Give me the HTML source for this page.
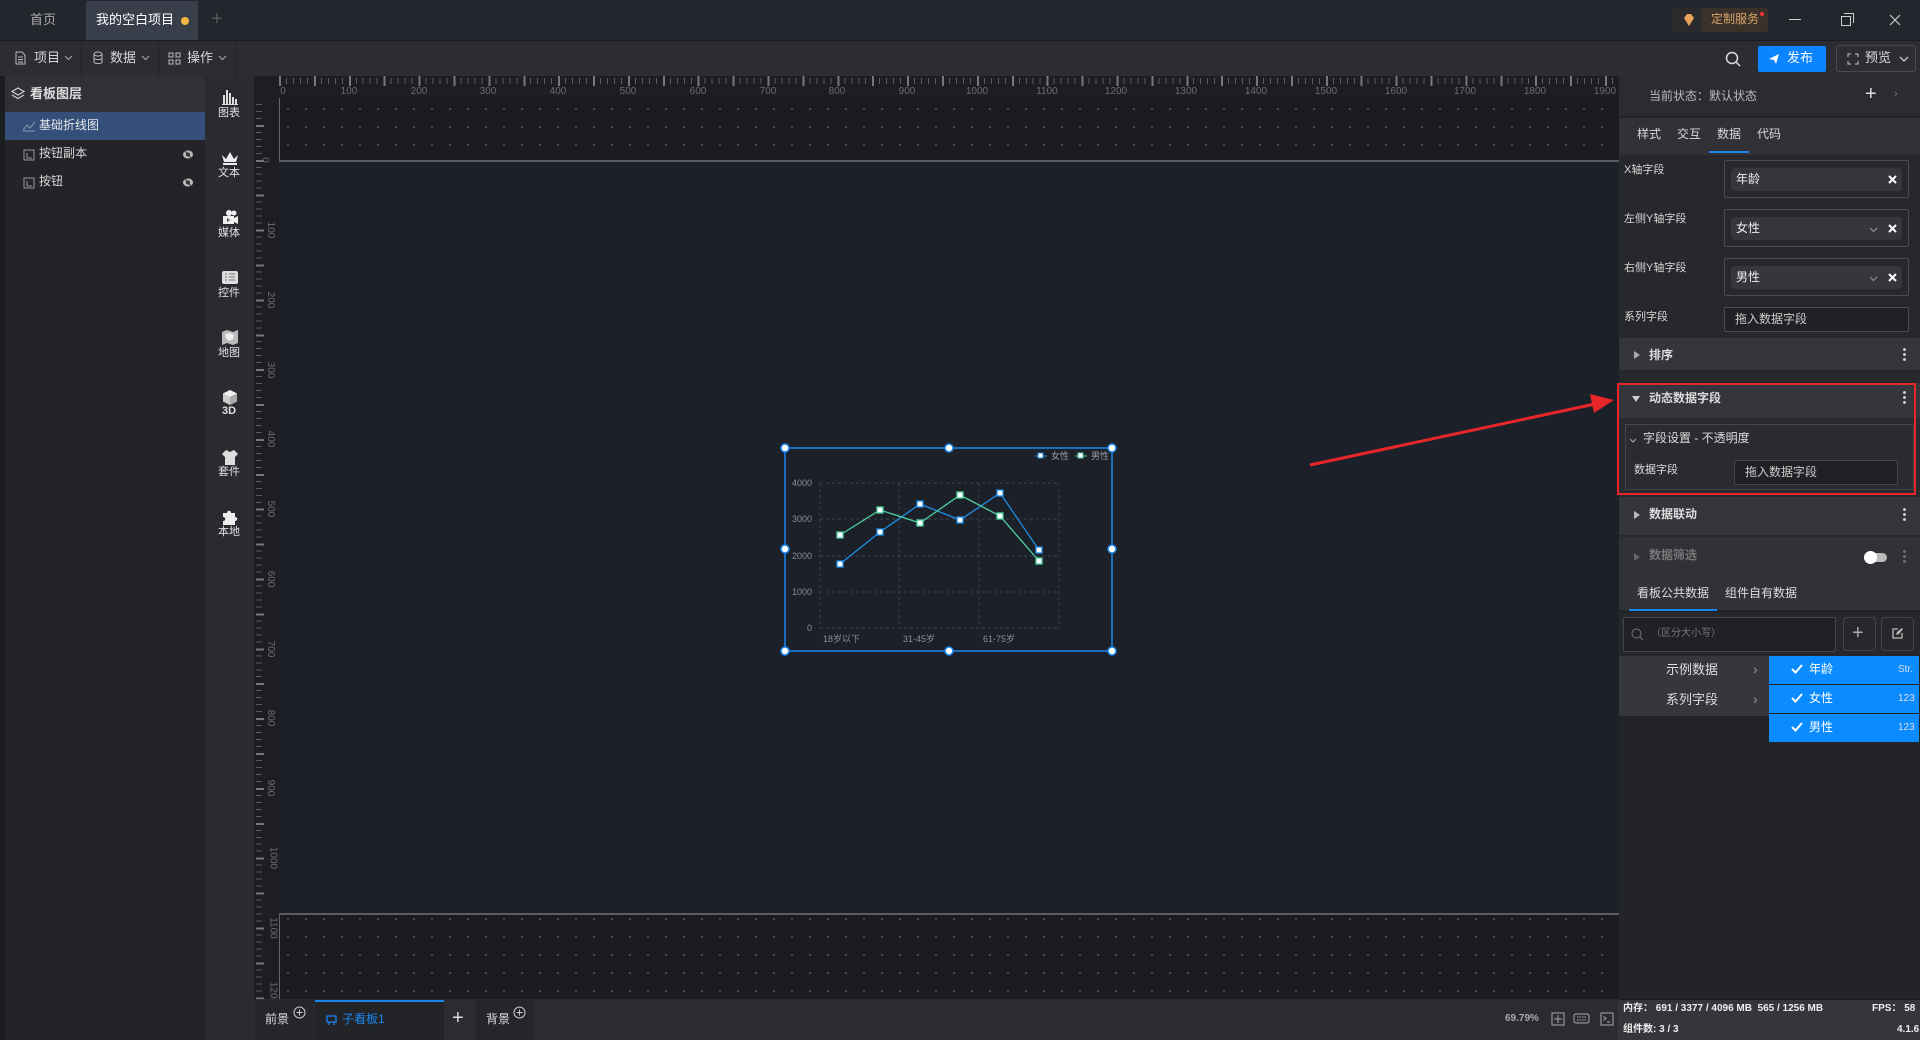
<!DOCTYPE html>
<html><head><meta charset="utf-8">
<style>
*{margin:0;padding:0;box-sizing:border-box}
body{width:1920px;height:1040px;overflow:hidden;background:#1b1c1f;font-family:"Liberation Sans","Noto Sans CJK SC",sans-serif;font-size:12px;color:#d8d8d8;position:relative}
.a{position:absolute}
.t{position:absolute;white-space:nowrap;line-height:1.2}
.rl{position:absolute;top:86px;font-size:10px;color:#6b6c70;transform:translateX(-50%)}
.ll{position:absolute;left:262px;font-size:10px;color:#6b6c70;transform:translateY(-50%) rotate(90deg);transform-origin:center}
.hdr{position:absolute;left:1619px;width:301px;background:#35363c}
.dots3{position:absolute;right:14px;width:3px}
.dots3 i{display:block;width:3px;height:3px;border-radius:50%;background:#ccc;margin-bottom:2px}
</style></head><body>
<!-- title bar -->
<div class="a" style="left:0;top:0;width:1920px;height:41px;background:#24262d;border-bottom:1px solid #1a1b1e"></div>
<div class="t" style="left:30px;top:12px;font-size:13px;color:#aaa">首页</div>
<div class="a" style="left:86px;top:1px;width:112px;height:39px;background:#393e4b"></div>
<div class="t" style="left:96px;top:12px;font-size:13px;color:#fff">我的空白项目</div>
<div class="a" style="left:181px;top:17px;width:8px;height:8px;border-radius:50%;background:#f5b942"></div>
<div class="t" style="left:211px;top:7px;font-size:20px;color:#555">+</div>
<div class="a" style="left:1672px;top:8px;width:96px;height:24px;background:#3a3128;border-radius:3px"></div>
<div class="a" style="left:1672px;top:8px;width:30px;height:24px;background:#2a2a2c;border-radius:3px 0 0 3px"></div>
<svg class="a" style="left:1682px;top:13px" width="14" height="14"><path d="M2 5 L5 1 H9 L12 5 L7 13 Z" fill="#e8a456"/></svg>
<div class="t" style="left:1711px;top:12px;font-size:12px;color:#d9a36a">定制服务</div>
<div class="a" style="left:1760px;top:12px;width:4px;height:4px;border-radius:50%;background:#e33"></div>
<div class="a" style="left:1789px;top:19px;width:12px;height:1px;background:#ccc"></div>
<div class="a" style="left:1841px;top:16px;width:10px;height:10px;border:1px solid #ccc"></div>
<div class="a" style="left:1844px;top:13px;width:10px;height:10px;border-top:1px solid #ccc;border-right:1px solid #ccc"></div>
<svg class="a" style="left:1889px;top:14px" width="12" height="12"><path d="M1 1L11 11M11 1L1 11" stroke="#ccc" stroke-width="1.2"/></svg>
<!-- toolbar -->
<div class="a" style="left:0;top:41px;width:1920px;height:35px;background:#2c2d32"></div>
<div class="a" style="left:81px;top:41px;width:1px;height:35px;background:#222"></div>
<div class="a" style="left:158px;top:41px;width:1px;height:35px;background:#222"></div>
<div class="a" style="left:235px;top:41px;width:1px;height:35px;background:#222"></div>
<svg class="a" style="left:15px;top:51px" width="11" height="14"><path d="M1 1H7L10 4V13H1Z M3 6H8M3 8.5H8M3 11H8" fill="none" stroke="#bbb"/></svg>
<div class="t" style="left:34px;top:50px;font-size:13px">项目</div>
<svg class="a" style="left:64px;top:55px" width="9" height="6"><path d="M1 1L4.5 4.5L8 1" fill="none" stroke="#aaa"/></svg>
<svg class="a" style="left:93px;top:51px" width="10" height="14"><ellipse cx="5" cy="3" rx="4" ry="2" fill="none" stroke="#bbb"/><path d="M1 3V11C1 13 9 13 9 11V3M1 7C1 9 9 9 9 7" fill="none" stroke="#bbb"/></svg>
<div class="t" style="left:110px;top:50px;font-size:13px">数据</div>
<svg class="a" style="left:141px;top:55px" width="9" height="6"><path d="M1 1L4.5 4.5L8 1" fill="none" stroke="#aaa"/></svg>
<svg class="a" style="left:168px;top:52px" width="13" height="13"><rect x="1" y="1" width="4" height="4" fill="none" stroke="#bbb"/><rect x="8" y="1" width="4" height="4" fill="none" stroke="#bbb"/><rect x="1" y="8" width="4" height="4" fill="none" stroke="#bbb"/><rect x="8" y="8" width="4" height="4" fill="none" stroke="#bbb"/></svg>
<div class="t" style="left:187px;top:50px;font-size:13px">操作</div>
<svg class="a" style="left:218px;top:55px" width="9" height="6"><path d="M1 1L4.5 4.5L8 1" fill="none" stroke="#aaa"/></svg>
<svg class="a" style="left:1725px;top:51px" width="17" height="17"><circle cx="7" cy="7" r="5.5" fill="none" stroke="#ddd" stroke-width="1.5"/><path d="M11 11L15 15" stroke="#ddd" stroke-width="1.5"/></svg>
<div class="a" style="left:1758px;top:46px;width:68px;height:26px;background:#0a84ff;border-radius:2px"></div>
<svg class="a" style="left:1768px;top:53px" width="12" height="12"><path d="M1 6L11 1L8 11L6 7Z" fill="#fff"/></svg>
<div class="t" style="left:1787px;top:50px;font-size:13px;color:#fff">发布</div>
<div class="a" style="left:1836px;top:45px;width:80px;height:27px;border:1px solid #4a4b50;border-radius:3px"></div>
<svg class="a" style="left:1847px;top:53px" width="12" height="12"><path d="M1 4V1H4M8 1H11V4M11 8V11H8M4 11H1V8" fill="none" stroke="#ccc"/></svg>
<div class="t" style="left:1865px;top:50px;font-size:13px;color:#ddd">预览</div>
<svg class="a" style="left:1899px;top:56px" width="10" height="6"><path d="M1 1L5 5L9 1" fill="none" stroke="#ccc" stroke-width="1.3"/></svg>
<!-- left panel -->
<div class="a" style="left:0;top:76px;width:5px;height:964px;background:#1c1d20"></div>
<div class="a" style="left:5px;top:76px;width:200px;height:36px;background:#303137"></div>
<div class="a" style="left:5px;top:112px;width:200px;height:928px;background:#232428"></div>
<svg class="a" style="left:11px;top:87px" width="14" height="13"><path d="M7 1L13 4.5L7 8L1 4.5Z M1 8L7 11.5L13 8" fill="none" stroke="#ccc" stroke-width="1.3"/></svg>
<div class="t" style="left:30px;top:86px;font-size:13px;font-weight:bold;color:#ddd">看板图层</div>
<div class="a" style="left:5px;top:112px;width:200px;height:28px;background:#34507a"></div>
<svg class="a" style="left:22px;top:120px" width="14" height="12"><path d="M1 10L5 5L8 8L13 2M1 11H13" fill="none" stroke="#8a9ab0"/></svg>
<div class="t" style="left:39px;top:118px;font-size:12px;color:#e8e8e8">基础折线图</div>
<svg class="a" style="left:23px;top:149px" width="12" height="12"><rect x="1" y="1" width="10" height="10" fill="none" stroke="#999"/><path d="M4 4V9H9" fill="none" stroke="#999"/></svg>
<div class="t" style="left:39px;top:146px;font-size:12px">按钮副本</div>
<svg class="a" style="left:182px;top:149px" width="12" height="11"><ellipse cx="6" cy="5.5" rx="5" ry="4" fill="#bbb"/><circle cx="6" cy="5.5" r="2" fill="#333"/><path d="M2 1L10 10" stroke="#333"/></svg>
<svg class="a" style="left:23px;top:177px" width="12" height="12"><rect x="1" y="1" width="10" height="10" fill="none" stroke="#999"/><path d="M4 4V9H9" fill="none" stroke="#999"/></svg>
<div class="t" style="left:39px;top:174px;font-size:12px">按钮</div>
<svg class="a" style="left:182px;top:177px" width="12" height="11"><ellipse cx="6" cy="5.5" rx="5" ry="4" fill="#bbb"/><circle cx="6" cy="5.5" r="2" fill="#333"/><path d="M2 1L10 10" stroke="#333"/></svg>
<!-- icon column -->
<div class="a" style="left:205px;top:76px;width:49px;height:964px;background:#2a2b30"></div>
<svg class="a" style="left:221px;top:89px" width="18" height="16"><rect x="2" y="6" width="2" height="9" fill="#ddd"/><rect x="5" y="1" width="2" height="14" fill="#ddd"/><rect x="8" y="4" width="2" height="11" fill="#ddd"/><rect x="11" y="8" width="2" height="7" fill="#ddd"/><rect x="14" y="10" width="2" height="5" fill="#ddd"/><rect x="1" y="15" width="16" height="1" fill="#ddd"/></svg>
<div class="t" style="left:218px;top:107px;font-size:11px;color:#e0e0e0">图表</div>
<svg class="a" style="left:221px;top:151px" width="18" height="15"><path d="M1 4L5 8L9 1L13 8L17 4L15 11H3Z" fill="#eee"/><rect x="2" y="12" width="14" height="2" fill="#eee"/></svg>
<div class="t" style="left:218px;top:167px;font-size:11px;color:#e0e0e0">文本</div>
<svg class="a" style="left:221px;top:209px" width="18" height="16"><circle cx="8" cy="4" r="3" fill="#eee"/><circle cx="13" cy="4" r="2.5" fill="#eee"/><rect x="2" y="7" width="11" height="8" fill="#eee"/><path d="M13 9L17 7V15L13 13Z" fill="#eee"/><path d="M6 9L9 11L6 13Z" fill="#555"/></svg>
<div class="t" style="left:218px;top:227px;font-size:11px;color:#e0e0e0">媒体</div>
<svg class="a" style="left:221px;top:270px" width="18" height="15"><rect x="1" y="1" width="16" height="13" rx="2" fill="#ddd"/><path d="M4 4H6M8 4H14M4 7H6M8 7H14M4 10H6M8 10H14" stroke="#777"/></svg>
<div class="t" style="left:218px;top:287px;font-size:11px;color:#e0e0e0">控件</div>
<svg class="a" style="left:221px;top:329px" width="18" height="17"><path d="M1 3L6 1L12 3L17 1V14L12 16L6 14L1 16Z" fill="#bbb"/><path d="M4 5L9 4L13 6L12 10L8 12L5 9Z" fill="#eee"/></svg>
<div class="t" style="left:218px;top:347px;font-size:11px;color:#e0e0e0">地图</div>
<svg class="a" style="left:222px;top:389px" width="16" height="17"><path d="M8 1L15 4.5V12.5L8 16L1 12.5V4.5Z" fill="#ccc"/><path d="M8 1L15 4.5L8 8L1 4.5Z" fill="#eee"/><path d="M8 8V16L15 12.5V4.5Z" fill="#aaa"/></svg>
<div class="t" style="left:222px;top:405px;font-size:11px;font-weight:bold;color:#e0e0e0">3D</div>
<svg class="a" style="left:221px;top:449px" width="18" height="17"><path d="M5 1L9 3L13 1L17 5L14 8V16H4V8L1 5Z" fill="#ddd"/></svg>
<div class="t" style="left:218px;top:466px;font-size:11px;color:#e0e0e0">套件</div>
<svg class="a" style="left:221px;top:509px" width="18" height="17"><path d="M2 4H6C6 1 10 1 10 4H14V8C17 8 17 12 14 12V16H2V12C5 12 5 8 2 8Z" fill="#eee"/></svg>
<div class="t" style="left:218px;top:526px;font-size:11px;color:#e0e0e0">本地</div>
<!-- rulers -->
<div class="a" style="left:254px;top:76px;width:1365px;height:22px;background:#1d1e21"></div>
<div class="a" style="left:254px;top:76px;width:25px;height:923px;background:#1d1e21"></div>
<div class="a" style="left:279px;top:78px;width:1340px;height:6px;background:repeating-linear-gradient(to right,#5a5b5f 0 1px,transparent 1px 6.979px)"></div>
<div class="a" style="left:279px;top:76px;width:1340px;height:10px;background:repeating-linear-gradient(to right,#77787c 0 2px,transparent 2px 34.895px)"></div>
<div class="a" style="left:256px;top:90px;width:6px;height:909px;background:repeating-linear-gradient(to bottom,#5a5b5f 0 1px,transparent 1px 6.979px)"></div>
<div class="a" style="left:256px;top:90px;width:8px;height:909px;background:repeating-linear-gradient(to bottom,#77787c 0 2px,transparent 2px 34.895px)"></div>
<div class="a" style="left:254px;top:76px;width:25px;height:22px;background:#1d1e21"></div>
<div class="rl" style="left:283px">0</div><div class="rl" style="left:349px">100</div><div class="rl" style="left:419px">200</div><div class="rl" style="left:488px">300</div><div class="rl" style="left:558px">400</div><div class="rl" style="left:628px">500</div><div class="rl" style="left:698px">600</div><div class="rl" style="left:768px">700</div><div class="rl" style="left:837px">800</div><div class="rl" style="left:907px">900</div><div class="rl" style="left:977px">1000</div><div class="rl" style="left:1047px">1100</div><div class="rl" style="left:1116px">1200</div><div class="rl" style="left:1186px">1300</div><div class="rl" style="left:1256px">1400</div><div class="rl" style="left:1326px">1500</div><div class="rl" style="left:1396px">1600</div><div class="rl" style="left:1465px">1700</div><div class="rl" style="left:1535px">1800</div><div class="rl" style="left:1605px">1900</div>
<div class="ll" style="top:160px">0</div><div class="ll" style="top:230px">100</div><div class="ll" style="top:300px">200</div><div class="ll" style="top:370px">300</div><div class="ll" style="top:439px">400</div><div class="ll" style="top:509px">500</div><div class="ll" style="top:579px">600</div><div class="ll" style="top:649px">700</div><div class="ll" style="top:718px">800</div><div class="ll" style="top:788px">900</div><div class="ll" style="top:858px">1000</div><div class="ll" style="top:928px">1100</div><div class="ll" style="top:993px">1200</div>
<!-- canvas -->
<div class="a" style="left:279px;top:98px;width:1340px;height:901px;background:#1b1c1f radial-gradient(circle,#55565a 0.8px,transparent 1.2px);background-size:18px 18px;background-position:0 2px"></div>
<div class="a" style="left:279px;top:98px;width:1px;height:901px;background:#666"></div>
<div class="a" style="left:279px;top:160px;width:1340px;height:755px;background:#1b2029;border-top:2px solid #5a5c60;border-bottom:2px solid #5a5c60"></div>
<svg class="a" style="left:0;top:0" width="1920" height="1040">
<g stroke="#3b4049" stroke-dasharray="3,3" fill="none"><path d="M820 483H1059M820 519H1059M820 556H1059M820 592H1059M820 628H1059M820 483V628M899 483V628M979 483V628M1059 483V628"/></g>
<g font-size="9" fill="#8a8e96" font-family="Liberation Sans, Noto Sans CJK SC, sans-serif" text-anchor="end"><text x="812" y="486">4000</text><text x="812" y="522">3000</text><text x="812" y="559">2000</text><text x="812" y="595">1000</text><text x="812" y="631">0</text></g>
<g font-size="9" fill="#8a8e96" font-family="Liberation Sans, Noto Sans CJK SC, sans-serif"><text x="823" y="642">18岁以下</text><text x="903" y="642">31-45岁</text><text x="983" y="642">61-75岁</text></g>
<polyline points="840,564 880,532 920,504 960,520 1000,493 1039,550" fill="none" stroke="#1f8fe6" stroke-width="1.3"/>
<polyline points="840,535 880,510 920,523 960,495 1000,516 1039,561" fill="none" stroke="#4fd1a0" stroke-width="1.3"/>
<g fill="#fff" stroke="#1f8fe6" stroke-width="1.3"><rect x="837" y="561" width="6" height="6"/><rect x="877" y="529" width="6" height="6"/><rect x="917" y="501" width="6" height="6"/><rect x="957" y="517" width="6" height="6"/><rect x="997" y="490" width="6" height="6"/><rect x="1036" y="547" width="6" height="6"/></g>
<g fill="#fff" stroke="#4fd1a0" stroke-width="1.3"><rect x="837" y="532" width="6" height="6"/><rect x="877" y="507" width="6" height="6"/><rect x="917" y="520" width="6" height="6"/><rect x="957" y="492" width="6" height="6"/><rect x="997" y="513" width="6" height="6"/><rect x="1036" y="558" width="6" height="6"/></g>
<path d="M1035 456H1047" stroke="#1f8fe6"/><rect x="1038" y="453" width="5" height="5" fill="#fff" stroke="#1f8fe6"/>
<path d="M1075 456H1087" stroke="#4fd1a0"/><rect x="1078" y="453" width="5" height="5" fill="#fff" stroke="#4fd1a0"/>
<g font-size="9" fill="#9aa0a8" font-family="Liberation Sans, Noto Sans CJK SC, sans-serif"><text x="1051" y="459">女性</text><text x="1091" y="459">男性</text></g>
<rect x="785" y="448" width="327" height="203" fill="none" stroke="#1a86f0" stroke-width="1.5"/>
<g fill="#fff" stroke="#1a86f0" stroke-width="1.5"><circle cx="785" cy="448" r="4"/><circle cx="949" cy="448" r="4"/><circle cx="1112" cy="448" r="4"/><circle cx="785" cy="549" r="4"/><circle cx="1112" cy="549" r="4"/><circle cx="785" cy="651" r="4"/><circle cx="949" cy="651" r="4"/><circle cx="1112" cy="651" r="4"/></g>
<path d="M1310 465L1595 404" stroke="#e8262a" stroke-width="3"/>
<path d="M1614 400L1590 394L1594 413Z" fill="#e8262a"/>
</svg>
<!-- bottom bar -->
<div class="a" style="left:254px;top:999px;width:1365px;height:41px;background:#2b2c31"></div>
<div class="a" style="left:255px;top:1000px;width:59px;height:40px;background:#25262b"></div>
<div class="t" style="left:265px;top:1012px;font-size:12px;color:#ddd">前景</div>
<svg class="a" style="left:293px;top:1006px" width="13" height="13"><circle cx="6.5" cy="6.5" r="5.5" fill="none" stroke="#ccc"/><path d="M6.5 3.5V9.5M3.5 6.5H9.5" stroke="#ccc"/></svg>
<div class="a" style="left:315px;top:1000px;width:129px;height:40px;background:#232428;border-top:2px solid #1a86f0"></div>
<svg class="a" style="left:326px;top:1015px" width="11" height="11"><path d="M1 1H10V7H1Z M3 7V10M8 7V10" fill="none" stroke="#1a86f0" stroke-width="1.3"/></svg>
<div class="t" style="left:342px;top:1012px;font-size:12px;color:#1a86f0">子看板1</div>
<div class="a" style="left:445px;top:1000px;width:30px;height:40px;background:#2b2c31"></div>
<div class="t" style="left:452px;top:1006px;font-size:20px;color:#ddd">+</div>
<div class="a" style="left:476px;top:1000px;width:58px;height:40px;background:#25262b"></div>
<div class="t" style="left:486px;top:1012px;font-size:12px;color:#ddd">背景</div>
<svg class="a" style="left:513px;top:1006px" width="13" height="13"><circle cx="6.5" cy="6.5" r="5.5" fill="none" stroke="#ccc"/><path d="M6.5 3.5V9.5M3.5 6.5H9.5" stroke="#ccc"/></svg>
<div class="t" style="left:1505px;top:1013px;font-size:10px;color:#aaa;font-weight:bold">69.79%</div>
<svg class="a" style="left:1551px;top:1012px" width="14" height="14"><rect x="1" y="1" width="12" height="12" fill="none" stroke="#aaa"/><path d="M7 3V11M3 7H11" stroke="#aaa"/></svg>
<svg class="a" style="left:1573px;top:1013px" width="17" height="11"><rect x="1" y="1" width="15" height="9" rx="2" fill="none" stroke="#aaa"/><path d="M4 4H13M4 7H13" stroke="#aaa" stroke-dasharray="1.5,1"/></svg>
<svg class="a" style="left:1600px;top:1012px" width="14" height="14"><rect x="1" y="1" width="12" height="12" fill="none" stroke="#aaa"/><path d="M3.5 4.5L6 6.5L3.5 8.5M7 10H10" fill="none" stroke="#aaa"/></svg>
<!-- right panel -->
<div class="a" style="left:1619px;top:76px;width:301px;height:923px;background:#27282c"></div>
<div class="a" style="left:1619px;top:76px;width:301px;height:41px;background:#2b2c31;border-bottom:1px solid #222"></div>
<div class="t" style="left:1649px;top:89px;font-size:12px;color:#bbb">当前状态：默认状态</div>
<div class="t" style="left:1865px;top:82px;font-size:20px;color:#ddd">+</div>
<div class="t" style="left:1894px;top:88px;font-size:11px;color:#777">›</div>
<div class="a" style="left:1619px;top:118px;width:301px;height:37px;background:#313238"></div>
<div class="t" style="left:1637px;top:127px;font-size:12px">样式</div>
<div class="t" style="left:1677px;top:127px;font-size:12px">交互</div>
<div class="t" style="left:1717px;top:127px;font-size:12px">数据</div>
<div class="t" style="left:1757px;top:127px;font-size:12px">代码</div>
<div class="a" style="left:1709px;top:151px;width:40px;height:2px;background:#1a86f0"></div>
<div class="t" style="left:1624px;top:164px;font-size:11px">X轴字段</div>
<div class="a" style="left:1724px;top:160px;width:185px;height:38px;border:1px solid #4a4b50;border-radius:2px"></div>
<div class="a" style="left:1731px;top:168px;width:171px;height:23px;background:#36373c;border-radius:4px"></div>
<div class="t" style="left:1736px;top:172px;font-size:12px;color:#eee">年龄</div>
<svg class="a" style="left:1888px;top:175px" width="9" height="9"><path d="M1 1L8 8M8 1L1 8" stroke="#fff" stroke-width="2"/></svg>
<div class="t" style="left:1624px;top:213px;font-size:11px">左侧Y轴字段</div>
<div class="a" style="left:1724px;top:209px;width:185px;height:38px;border:1px solid #4a4b50;border-radius:2px"></div>
<div class="a" style="left:1731px;top:217px;width:171px;height:23px;background:#36373c;border-radius:4px"></div>
<div class="t" style="left:1736px;top:221px;font-size:12px;color:#eee">女性</div>
<svg class="a" style="left:1869px;top:227px" width="9" height="6"><path d="M1 1L4.5 4.5L8 1" fill="none" stroke="#999"/></svg>
<svg class="a" style="left:1888px;top:224px" width="9" height="9"><path d="M1 1L8 8M8 1L1 8" stroke="#fff" stroke-width="2"/></svg>
<div class="t" style="left:1624px;top:262px;font-size:11px">右侧Y轴字段</div>
<div class="a" style="left:1724px;top:258px;width:185px;height:38px;border:1px solid #4a4b50;border-radius:2px"></div>
<div class="a" style="left:1731px;top:266px;width:171px;height:23px;background:#36373c;border-radius:4px"></div>
<div class="t" style="left:1736px;top:270px;font-size:12px;color:#eee">男性</div>
<svg class="a" style="left:1869px;top:276px" width="9" height="6"><path d="M1 1L4.5 4.5L8 1" fill="none" stroke="#999"/></svg>
<svg class="a" style="left:1888px;top:273px" width="9" height="9"><path d="M1 1L8 8M8 1L1 8" stroke="#fff" stroke-width="2"/></svg>
<div class="t" style="left:1624px;top:311px;font-size:11px">系列字段</div>
<div class="a" style="left:1724px;top:307px;width:185px;height:25px;border:1px solid #4a4b50;border-radius:2px;background:#202124"></div>
<div class="t" style="left:1735px;top:312px;font-size:12px;color:#ccc">拖入数据字段</div>
<div class="hdr" style="top:338px;height:32px"></div>
<svg class="a" style="left:1634px;top:351px" width="6" height="8"><path d="M0 0L6 4L0 8Z" fill="#aaa"/></svg>
<div class="t" style="left:1649px;top:348px;font-size:12px;font-weight:bold;color:#ddd">排序</div>
<div class="dots3" style="top:348px"><i></i><i></i><i></i></div>
<div class="hdr" style="top:383px;height:35px"></div>
<svg class="a" style="left:1632px;top:396px" width="8" height="6"><path d="M0 0H8L4 6Z" fill="#ccc"/></svg>
<div class="t" style="left:1649px;top:391px;font-size:12px;font-weight:bold;color:#ddd">动态数据字段</div>
<div class="dots3" style="top:391px"><i></i><i></i><i></i></div>
<div class="a" style="left:1619px;top:418px;width:301px;height:78px;background:#2a2b30"></div>
<div class="a" style="left:1625px;top:424px;width:289px;height:66px;border:1px solid #45464b"></div>
<svg class="a" style="left:1629px;top:438px" width="8" height="6"><path d="M1 1L4 4L7 1" fill="none" stroke="#aaa"/></svg>
<div class="t" style="left:1643px;top:431px;font-size:12px;color:#ddd">字段设置 - 不透明度</div>
<div class="t" style="left:1634px;top:464px;font-size:11px;color:#ddd">数据字段</div>
<div class="a" style="left:1734px;top:460px;width:164px;height:25px;background:#202124;border:1px solid #45464b;border-radius:2px"></div>
<div class="t" style="left:1745px;top:465px;font-size:12px;color:#ccc">拖入数据字段</div>
<div class="a" style="left:1617px;top:383px;width:299px;height:112px;border:2px solid #e8262a"></div>
<div class="hdr" style="top:497px;height:38px"></div>
<svg class="a" style="left:1634px;top:511px" width="6" height="8"><path d="M0 0L6 4L0 8Z" fill="#bbb"/></svg>
<div class="t" style="left:1649px;top:507px;font-size:12px;font-weight:bold;color:#ddd">数据联动</div>
<div class="dots3" style="top:508px"><i></i><i></i><i></i></div>
<div class="hdr" style="top:537px;height:73px;background:#313238"></div>
<svg class="a" style="left:1634px;top:553px" width="6" height="8"><path d="M0 0L6 4L0 8Z" fill="#666"/></svg>
<div class="t" style="left:1649px;top:548px;font-size:12px;font-weight:bold;color:#777">数据筛选</div>
<div class="a" style="left:1864px;top:553px;width:23px;height:9px;border-radius:5px;background:#bbb"></div>
<div class="a" style="left:1864px;top:551px;width:13px;height:13px;border-radius:50%;background:#fff"></div>
<div class="dots3" style="top:550px;opacity:.4"><i></i><i></i><i></i></div>
<div class="t" style="left:1637px;top:586px;font-size:12px;color:#ddd">看板公共数据</div>
<div class="t" style="left:1725px;top:586px;font-size:12px;color:#ddd">组件自有数据</div>
<div class="a" style="left:1629px;top:609px;width:88px;height:2px;background:#1a86f0"></div>
<div class="a" style="left:1619px;top:611px;width:301px;height:1px;background:#1e1f22"></div>
<div class="a" style="left:1619px;top:612px;width:301px;height:44px;background:#27282c"></div>
<div class="a" style="left:1623px;top:617px;width:213px;height:35px;background:#202124;border:1px solid #45464b;border-radius:2px"></div>
<svg class="a" style="left:1631px;top:628px" width="13" height="13"><circle cx="5.5" cy="5.5" r="4.5" fill="none" stroke="#777"/><path d="M9 9L12 12" stroke="#777"/></svg>
<div class="t" style="left:1651px;top:628px;font-size:10px;color:#777">（区分大小写）</div>
<div class="a" style="left:1843px;top:617px;width:33px;height:34px;border:1px solid #45464b;border-radius:4px"></div>
<div class="t" style="left:1852px;top:621px;font-size:20px;color:#aaa">+</div>
<div class="a" style="left:1881px;top:617px;width:33px;height:34px;border:1px solid #45464b;border-radius:4px"></div>
<svg class="a" style="left:1891px;top:627px" width="13" height="13"><path d="M7 2H2V11H11V6" fill="none" stroke="#bbb" stroke-width="1.3"/><path d="M5 8L6 5L11 1L12 2L8 7Z" fill="#bbb"/></svg>
<div class="a" style="left:1619px;top:656px;width:301px;height:343px;background:#232428"></div>
<div class="a" style="left:1619px;top:656px;width:150px;height:60px;background:#36373d"></div>
<div class="t" style="left:1666px;top:662px;font-size:13px;color:#ddd">示例数据</div>
<div class="t" style="left:1753px;top:661px;font-size:14px;color:#999">›</div>
<div class="t" style="left:1666px;top:692px;font-size:13px;color:#ddd">系列字段</div>
<div class="t" style="left:1753px;top:691px;font-size:14px;color:#999">›</div>
<div class="a" style="left:1769px;top:656px;width:150px;height:28px;background:#0a8bff"></div>
<div class="a" style="left:1769px;top:685px;width:150px;height:28px;background:#0a8bff"></div>
<div class="a" style="left:1769px;top:714px;width:150px;height:28px;background:#0a8bff"></div>
<svg class="a" style="left:1791px;top:664px" width="12" height="10"><path d="M1 5L4.5 8.5L11 1" fill="none" stroke="#fff" stroke-width="2"/></svg>
<svg class="a" style="left:1791px;top:693px" width="12" height="10"><path d="M1 5L4.5 8.5L11 1" fill="none" stroke="#fff" stroke-width="2"/></svg>
<svg class="a" style="left:1791px;top:722px" width="12" height="10"><path d="M1 5L4.5 8.5L11 1" fill="none" stroke="#fff" stroke-width="2"/></svg>
<div class="t" style="left:1809px;top:662px;font-size:12px;color:#fff">年龄</div>
<div class="t" style="left:1809px;top:691px;font-size:12px;color:#fff">女性</div>
<div class="t" style="left:1809px;top:720px;font-size:12px;color:#fff">男性</div>
<div class="t" style="left:1898px;top:664px;font-size:10px;color:#dde">Str.</div>
<div class="t" style="left:1898px;top:693px;font-size:10px;color:#dde">123</div>
<div class="t" style="left:1898px;top:722px;font-size:10px;color:#dde">123</div>
<div class="a" style="left:1618px;top:1000px;width:302px;height:40px;background:#35363c"></div>
<div class="t" style="left:1623px;top:1003px;font-size:10px;font-weight:bold;color:#eee">内存： 691 / 3377 / 4096 MB&nbsp; 565 / 1256 MB</div>
<div class="t" style="left:1872px;top:1003px;font-size:10px;font-weight:bold;color:#eee">FPS： 58</div>
<div class="t" style="left:1623px;top:1024px;font-size:10px;font-weight:bold;color:#eee">组件数: 3 / 3</div>
<div class="t" style="left:1897px;top:1024px;font-size:10px;font-weight:bold;color:#eee">4.1.6</div>
</body></html>
